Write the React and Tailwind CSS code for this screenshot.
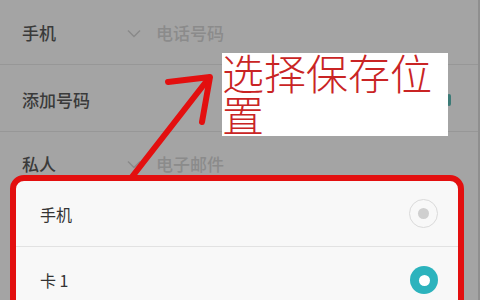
import React from "react";

const cjk = { fontFamily: '"Noto Sans CJK SC", "Noto Sans", sans-serif' };

function Chevron() {
  return (
    <svg width="14" height="9" viewBox="0 0 14 9" className="shrink-0">
      <polyline points="1,1.5 7,7.5 13,1.5" fill="none" stroke="#8a8a8a" strokeWidth="1.5" />
    </svg>
  );
}

function Row({ label, placeholder, h, pt, border = true, children }) {
  return (
    <div className={`flex items-center pl-[22px] ${h} ${pt} ${border ? "border-b border-[#979797]" : ""}`}>
      <div className="w-[105px] text-[17px] font-medium text-[#3a3a3a]">{label}</div>
      {placeholder && (
        <div className="flex items-center">
          <Chevron />
          <span className="ml-[15px] text-[17px] font-medium text-[#8b8b8b]">{placeholder}</span>
        </div>
      )}
      {children}
    </div>
  );
}

export default function App() {
  return (
    <div className="relative w-[480px] h-[300px] overflow-hidden bg-[#a4a4a4]" style={cjk}>
      <div className="flex flex-col">
        <Row label="手机" placeholder="电话号码" h="h-[65px]" pt="pt-[2px]" />
        <Row label="添加号码" h="h-[67px]" pt="pt-[4px]">
          <div className="ml-auto mr-[29px] w-[4px] h-[12px] rounded-full bg-[#3b7a76]" />
        </Row>
        <Row label="私人" placeholder="电子邮件" h="h-[64px]" pt="pt-[0px]" border={false} />
      </div>

      <div className="absolute top-0 bottom-0 right-0 w-[2px] bg-[#8f8f8f]" />

      {/* annotation box */}
      <div className="absolute left-[222px] top-[53px] w-[226px] h-[83px] bg-white">
        <div className="text-[42px] leading-[42px] font-light text-[#c92424] -mt-[2px]">选择保存位置</div>
      </div>

      {/* arrow */}
      <svg className="absolute left-0 top-0" width="480" height="300" viewBox="0 0 480 300">
        <line x1="128" y1="182" x2="209" y2="78" stroke="#e30f0f" strokeWidth="6" strokeLinecap="round" />
        <polyline points="168,82 210,77 202,122" fill="none" stroke="#e30f0f" strokeWidth="6" strokeLinecap="round" strokeLinejoin="round" />
      </svg>

      {/* bottom sheet with red outline */}
      <div className="absolute left-[10px] right-[16px] top-[175px] -bottom-[30px] border-[6px] border-[#e30f0f] rounded-[14px] bg-[#f8f8f8] overflow-hidden">
        <div className="flex items-center justify-between h-[66px] pl-[24px] pr-[20px] border-b border-[#e2e2e2]">
          <span className="text-[16px] text-[#333]">手机</span>
          <div className="w-[29px] h-[29px] rounded-full border-[1.5px] border-[#dadada] flex items-center justify-center">
            <div className="w-[11px] h-[11px] rounded-full bg-[#cfcfcf]" />
          </div>
        </div>
        <div className="flex items-center justify-between h-[66px] pl-[24px] pr-[20px]">
          <span className="text-[16px] text-[#333]">卡 1</span>
          <div className="w-[28px] h-[28px] rounded-full bg-[#2cb3bd] flex items-center justify-center">
            <div className="w-[11px] h-[11px] rounded-full bg-white" />
          </div>
        </div>
      </div>
    </div>
  );
}
